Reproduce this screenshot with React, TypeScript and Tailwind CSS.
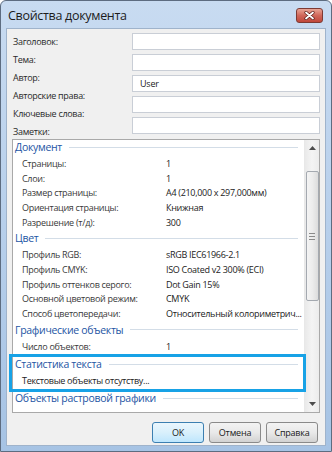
import React from "react";

const docRows: [string, string][] = [
  ["Страницы:", "1"],
  ["Слои:", "1"],
  ["Размер страницы:", "A4 (210,000 x 297,000мм)"],
  ["Ориентация страницы:", "Книжная"],
  ["Разрешение (т/д):", "300"],
];

const colorRows: [string, string][] = [
  ["Профиль RGB:", "sRGB IEC61966-2.1"],
  ["Профиль CMYK:", "ISO Coated v2 300% (ECI)"],
  ["Профиль оттенков серого:", "Dot Gain 15%"],
  ["Основной цветовой режим:", "CMYK"],
  ["Способ цветопередачи:", "Относительный колориметрич..."],
];

const fieldLabels = ["Заголовок:", "Тема:", "Автор:", "Авторские права:", "Ключевые слова:", "Заметки:"];
const fieldValues = ["", "", "User", "", ""];

// section title with the thin rule after it
const SectionHeader = ({ title, extra }: { title: string; extra?: boolean }) => (
  <div className={extra ? "mt-[1.5px] flex h-[14px] items-center pl-[2px] pr-[6px]" : "flex h-[14px] items-center pl-[2px] pr-[6px]"}>
    <span className="text-[10.5px] leading-none tracking-[-0.3px] text-[#2455a4] whitespace-nowrap">{title}</span>
    <div className="ml-[7px] h-px flex-1 bg-[#d3dde7]" />
  </div>
);

const Rows = ({ rows }: { rows: [string, string][] }) => (
  <div className="py-[2px]">
    {rows.map(([k, v]) => (
      <div key={k} className="grid h-[14.7px] grid-cols-[144px_1fr] items-center pl-[9px] text-[9px] leading-none tracking-[-0.3px]">
        <span className="text-[#3a3a3a] whitespace-nowrap">{k}</span>
        <span className="text-[#222] whitespace-nowrap">{v}</span>
      </div>
    ))}
  </div>
);

const Button = ({ label, primary }: { label: string; primary?: boolean }) => (
  <div
    className={
      primary
        ? "flex h-[21px] w-[52px] items-center justify-center rounded-[3px] border border-[#3c7fb1] bg-gradient-to-b from-[#eaf6fd] via-[#d9f0fc] to-[#bee6fd] text-[9px] tracking-[-0.2px] text-[#1a1a1a]"
        : "flex h-[21px] w-[52px] items-center justify-center rounded-[3px] border border-[#8a8a8a] bg-gradient-to-b from-[#f3f3f3] via-[#e9e9e9] to-[#d2d2d2] text-[9px] tracking-[-0.2px] text-[#1a1a1a]"
    }
  >
    {label}
  </div>
);

export default function App() {
  return (
    <div className="relative h-[452px] w-[332px] overflow-hidden rounded-t-[6px] border border-[#5d6c80] bg-gradient-to-b from-[#c8dbf1] via-[#b7cfeb] to-[#a6c3e4] font-['Open_Sans','Noto_Sans',sans-serif]">
      {/* title bar */}
      <div className="flex h-[27px] items-start justify-between pl-[7px] pr-[8px]">
        <span className="mt-[6px] text-[12.5px] leading-[18px] tracking-[-0.3px] text-[#1c1c1c]">Свойства документа</span>
        <div className="mt-[7px] flex h-[15px] w-[27px] items-center justify-center rounded-[3px] border border-[#7d3a33] bg-gradient-to-b from-[#e8a596] via-[#d0675a] to-[#c0473b]">
          <svg width="11" height="9" viewBox="0 0 11 9">
            <path d="M2 1.5 L9 7.5 M9 1.5 L2 7.5" stroke="#5a1f1a" strokeWidth="3.2" strokeLinecap="round" />
            <path d="M2 1.5 L9 7.5 M9 1.5 L2 7.5" stroke="#ffffff" strokeWidth="1.8" strokeLinecap="round" />
          </svg>
        </div>
      </div>

      {/* client area */}
      <div className="mx-[5px] flex h-[418px] flex-col border border-[#9fb3cb] bg-[#f0f0f0] px-[5px]">
        <div className="grid h-[110px] grid-cols-[120px_1fr]">
          <div className="pl-px pt-[3px]">
            {fieldLabels.map((l) => (
              <div key={l} className="flex h-[18px] items-center text-[9px] leading-none tracking-[-0.3px] text-[#2a2a2a]">
                {l}
              </div>
            ))}
          </div>
          <div className="flex flex-col gap-[4px] pt-[4px]">
            {fieldValues.map((v, i) => (
              <div key={i} className="flex h-[17px] items-center border border-[#c9ced6] bg-white px-[7px] text-[9px] tracking-[-0.2px] text-[#222]">
                {v}
              </div>
            ))}
          </div>
        </div>

        {/* properties list */}
        <div className="flex h-[274px] border border-[#a9a9a9] bg-white">
          <div className="flex-1">
            <SectionHeader title="Документ" />
            <Rows rows={docRows} />
            <SectionHeader title="Цвет" />
            <Rows rows={colorRows} />
            <SectionHeader title="Графические объекты" />
            <Rows rows={[["Число объектов:", "1"]]} />
            <SectionHeader title="Статистика текста" extra />
            <div className="py-[2px]">
              <div className="flex h-[14.7px] items-center pl-[9px] text-[9px] leading-none tracking-[-0.3px] text-[#222]">
                Текстовые объекты отсутству...
              </div>
            </div>
            <SectionHeader title="Объекты растровой графики" extra />
          </div>
          {/* scrollbar */}
          <div className="flex w-[15px] flex-col items-center border-l border-[#e8e8e8] bg-gradient-to-r from-[#e9e9e9] via-[#f4f4f4] to-[#ececec]">
            <div className="flex h-[16px] items-center justify-center">
              <svg width="7" height="4" viewBox="0 0 7 4">
                <path d="M0 4 L3.5 0 L7 4 Z" fill="#4d4d4d" />
              </svg>
            </div>
            <div className="mt-[15px] flex h-[130px] w-[13px] flex-col items-center justify-center gap-[2px] rounded-[2px] border border-[#a4a9b0] bg-gradient-to-r from-[#f4f4f4] via-[#ececec] to-[#dcdcdc]">
              <div className="h-px w-[6px] bg-[#8a8a8a]" />
              <div className="h-px w-[6px] bg-[#8a8a8a]" />
              <div className="h-px w-[6px] bg-[#8a8a8a]" />
            </div>
            <div className="flex-1" />
            <div className="flex h-[16px] items-center justify-center">
              <svg width="7" height="4" viewBox="0 0 7 4">
                <path d="M0 0 L3.5 4 L7 0 Z" fill="#4d4d4d" />
              </svg>
            </div>
          </div>
        </div>

        <div className="mt-[9px] flex justify-end gap-[5px] pr-[2px]">
          <Button label="OK" primary />
          <Button label="Отмена" />
          <Button label="Справка" />
        </div>
      </div>

      {/* highlight frame */}
      <div className="absolute left-[8px] top-[353px] h-[38px] w-[297px] border-[3px] border-[#17a2e6]" />
    </div>
  );
}
